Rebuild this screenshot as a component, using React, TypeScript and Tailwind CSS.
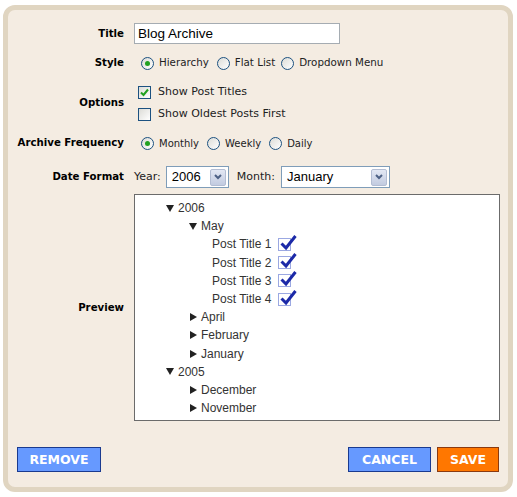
import React from "react";

const ui = "font-['DejaVu_Sans',sans-serif]";
const arial = "font-['Liberation_Sans',Arial,sans-serif]";

function Radio({ checked }: { checked?: boolean }) {
  return (
    <span className="flex h-[13px] w-[13px] shrink-0 items-center justify-center rounded-full border border-[#1c5180] bg-linear-to-br from-[#dcdcd7] to-white">
      {checked && <span className="h-[5px] w-[5px] rounded-full bg-[#21a121]" />}
    </span>
  );
}

function Checkbox({ checked }: { checked?: boolean }) {
  return (
    <span className="flex h-[13px] w-[13px] shrink-0 items-center justify-center border border-[#1c5180] bg-linear-to-br from-[#dcdcd7] to-white">
      {checked && (
        <svg width="9" height="9" viewBox="0 0 9 9">
          <path d="M1 4.5 L3.5 7 L8 1.5" fill="none" stroke="#21a121" strokeWidth="2" />
        </svg>
      )}
    </span>
  );
}

function Select({ value, width }: { value: string; width: string }) {
  return (
    <div className={`flex h-[22px] items-center justify-between border border-[#7f9db9] bg-white pl-[5px] pr-[2px] ${width}`}>
      <span className={`${arial} text-[13px] text-black`}>{value}</span>
      <span className="flex h-[17px] w-[16px] items-center justify-center rounded-[2px] border border-[#b3bdd3] bg-linear-to-b from-[#e3e8f4] to-[#c2cbe0]">
        <svg width="8" height="6" viewBox="0 0 8 6">
          <path d="M1 1 L4 4 L7 1" fill="none" stroke="#4d6185" strokeWidth="2" />
        </svg>
      </span>
    </div>
  );
}

function Down() {
  return (
    <svg width="8" height="7" viewBox="0 0 8 7" className="shrink-0">
      <polygon points="0,0 8,0 4,7" fill="#222" />
    </svg>
  );
}

function Right() {
  return (
    <svg width="7" height="8" viewBox="0 0 7 8" className="shrink-0">
      <polygon points="0,0 7,4 0,8" fill="#222" />
    </svg>
  );
}

function BlueCheck() {
  return (
    <span className="relative ml-[7px] inline-block h-[13px] w-[13px] border border-[#9ba8e2] bg-white">
      <svg width="18" height="17" viewBox="0 0 18 17" className="absolute left-[1px] top-[-5px]">
        <path d="M1.5 9.5 L6 14 L15.5 2" fill="none" stroke="#1c2aa8" strokeWidth="3" />
      </svg>
    </span>
  );
}

function TreeRow({ pad, icon, text, check }: { pad: string; icon?: "down" | "right"; text: string; check?: boolean }) {
  return (
    <div className={`flex h-[18.2px] items-center ${pad}`}>
      {icon === "down" && <Down />}
      {icon === "right" && <Right />}
      <span className={icon ? "ml-[4px]" : ""}>{text}</span>
      {check && <BlueCheck />}
    </div>
  );
}

function Label({ children }: { children: React.ReactNode }) {
  return <div className={`${ui} text-right text-[10.2px] font-bold text-black`}>{children}</div>;
}

function Button({ children, tone, width }: { children: React.ReactNode; tone: "blue" | "orange"; width: string }) {
  const color =
    tone === "blue"
      ? "bg-[#6699ff] border-[#1a3a8f]"
      : "bg-[#ff7700] border-[#8a3a10]";
  return (
    <button
      type="button"
      className={`${ui} flex h-[25px] items-center justify-center border pt-[1px] text-[12.5px] font-bold text-white ${color} ${width}`}
    >
      {children}
    </button>
  );
}

export default function App() {
  return (
    <div className="min-h-screen bg-white pl-[3px] pt-[5px]">
      <div className="flex h-[487px] w-[510px] flex-col rounded-[12px] border-[5px] border-[#e0d5c1] bg-[#f4ece2]">
        <div className="grid grid-cols-[116px_1fr] items-center gap-x-[10px] pt-[13px]">
          <Label>Title</Label>
          <input
            readOnly
            value="Blog Archive"
            className={`${arial} h-[21px] w-[206px] border border-[#a5acb2] bg-white px-[3px] text-[13.5px] text-black outline-none`}
          />
        </div>

        <div className="mt-[11px] grid h-[16px] grid-cols-[116px_1fr] items-center gap-x-[10px]">
          <Label>Style</Label>
          <div className={`${ui} flex items-center pl-[7px] text-[10.3px] text-[#222]`}>
            <Radio checked />
            <span className="ml-[5px]">Hierarchy</span>
            <span className="ml-[8px]"><Radio /></span>
            <span className="ml-[5px]">Flat List</span>
            <span className="ml-[6px]"><Radio /></span>
            <span className="ml-[5px]">Dropdown Menu</span>
          </div>
        </div>

        <div className="mt-[10px] grid grid-cols-[116px_1fr] items-center gap-x-[10px]">
          <Label>Options</Label>
          <div className={`${ui} flex flex-col pl-[4px] text-[11px] text-[#222]`}>
            <div className="flex h-[22px] items-center">
              <Checkbox checked />
              <span className="ml-[7px]">Show Post Titles</span>
            </div>
            <div className="flex h-[22px] items-center">
              <Checkbox />
              <span className="ml-[7px]">Show Oldest Posts First</span>
            </div>
          </div>
        </div>

        <div className="mt-[10px] grid h-[16px] grid-cols-[116px_1fr] items-center gap-x-[10px]">
          <Label>Archive Frequency</Label>
          <div className={`${ui} flex items-center pl-[7px] text-[10px] text-[#222]`}>
            <Radio checked />
            <span className="ml-[5px]">Monthly</span>
            <span className="ml-[8px]"><Radio /></span>
            <span className="ml-[5px]">Weekly</span>
            <span className="ml-[8px]"><Radio /></span>
            <span className="ml-[5px]">Daily</span>
          </div>
        </div>

        <div className="mt-[15px] grid grid-cols-[116px_1fr] items-center gap-x-[10px]">
          <Label>Date Format</Label>
          <div className={`${ui} flex items-center text-[11px] text-[#222]`}>
            <span>Year:</span>
            <span className="ml-[5px]"><Select value="2006" width="w-[63px]" /></span>
            <span className="ml-[8px]">Month:</span>
            <span className="ml-[6px]"><Select value="January" width="w-[109px]" /></span>
          </div>
        </div>

        <div className="mt-[6px] grid grid-cols-[116px_1fr] items-center gap-x-[10px]">
          <Label>Preview</Label>
          <div className={`${arial} h-[227px] w-[366px] border border-[#6b6b6b] bg-white pt-[4px] text-[12px] text-[#333]`}>
            <TreeRow pad="pl-[31px]" icon="down" text="2006" />
            <TreeRow pad="pl-[54px]" icon="down" text="May" />
            <TreeRow pad="pl-[77px]" text="Post Title 1" check />
            <TreeRow pad="pl-[77px]" text="Post Title 2" check />
            <TreeRow pad="pl-[77px]" text="Post Title 3" check />
            <TreeRow pad="pl-[77px]" text="Post Title 4" check />
            <TreeRow pad="pl-[55px]" icon="right" text="April" />
            <TreeRow pad="pl-[55px]" icon="right" text="February" />
            <TreeRow pad="pl-[55px]" icon="right" text="January" />
            <TreeRow pad="pl-[31px]" icon="down" text="2005" />
            <TreeRow pad="pl-[55px]" icon="right" text="December" />
            <TreeRow pad="pl-[55px]" icon="right" text="November" />
          </div>
        </div>

        <div className="mt-[26px] flex items-center justify-between px-[9px]">
          <Button tone="blue" width="w-[84px]">REMOVE</Button>
          <div className="flex gap-[6px]">
            <Button tone="blue" width="w-[83px]">CANCEL</Button>
            <Button tone="orange" width="w-[62px]">SAVE</Button>
          </div>
        </div>
      </div>
    </div>
  );
}
